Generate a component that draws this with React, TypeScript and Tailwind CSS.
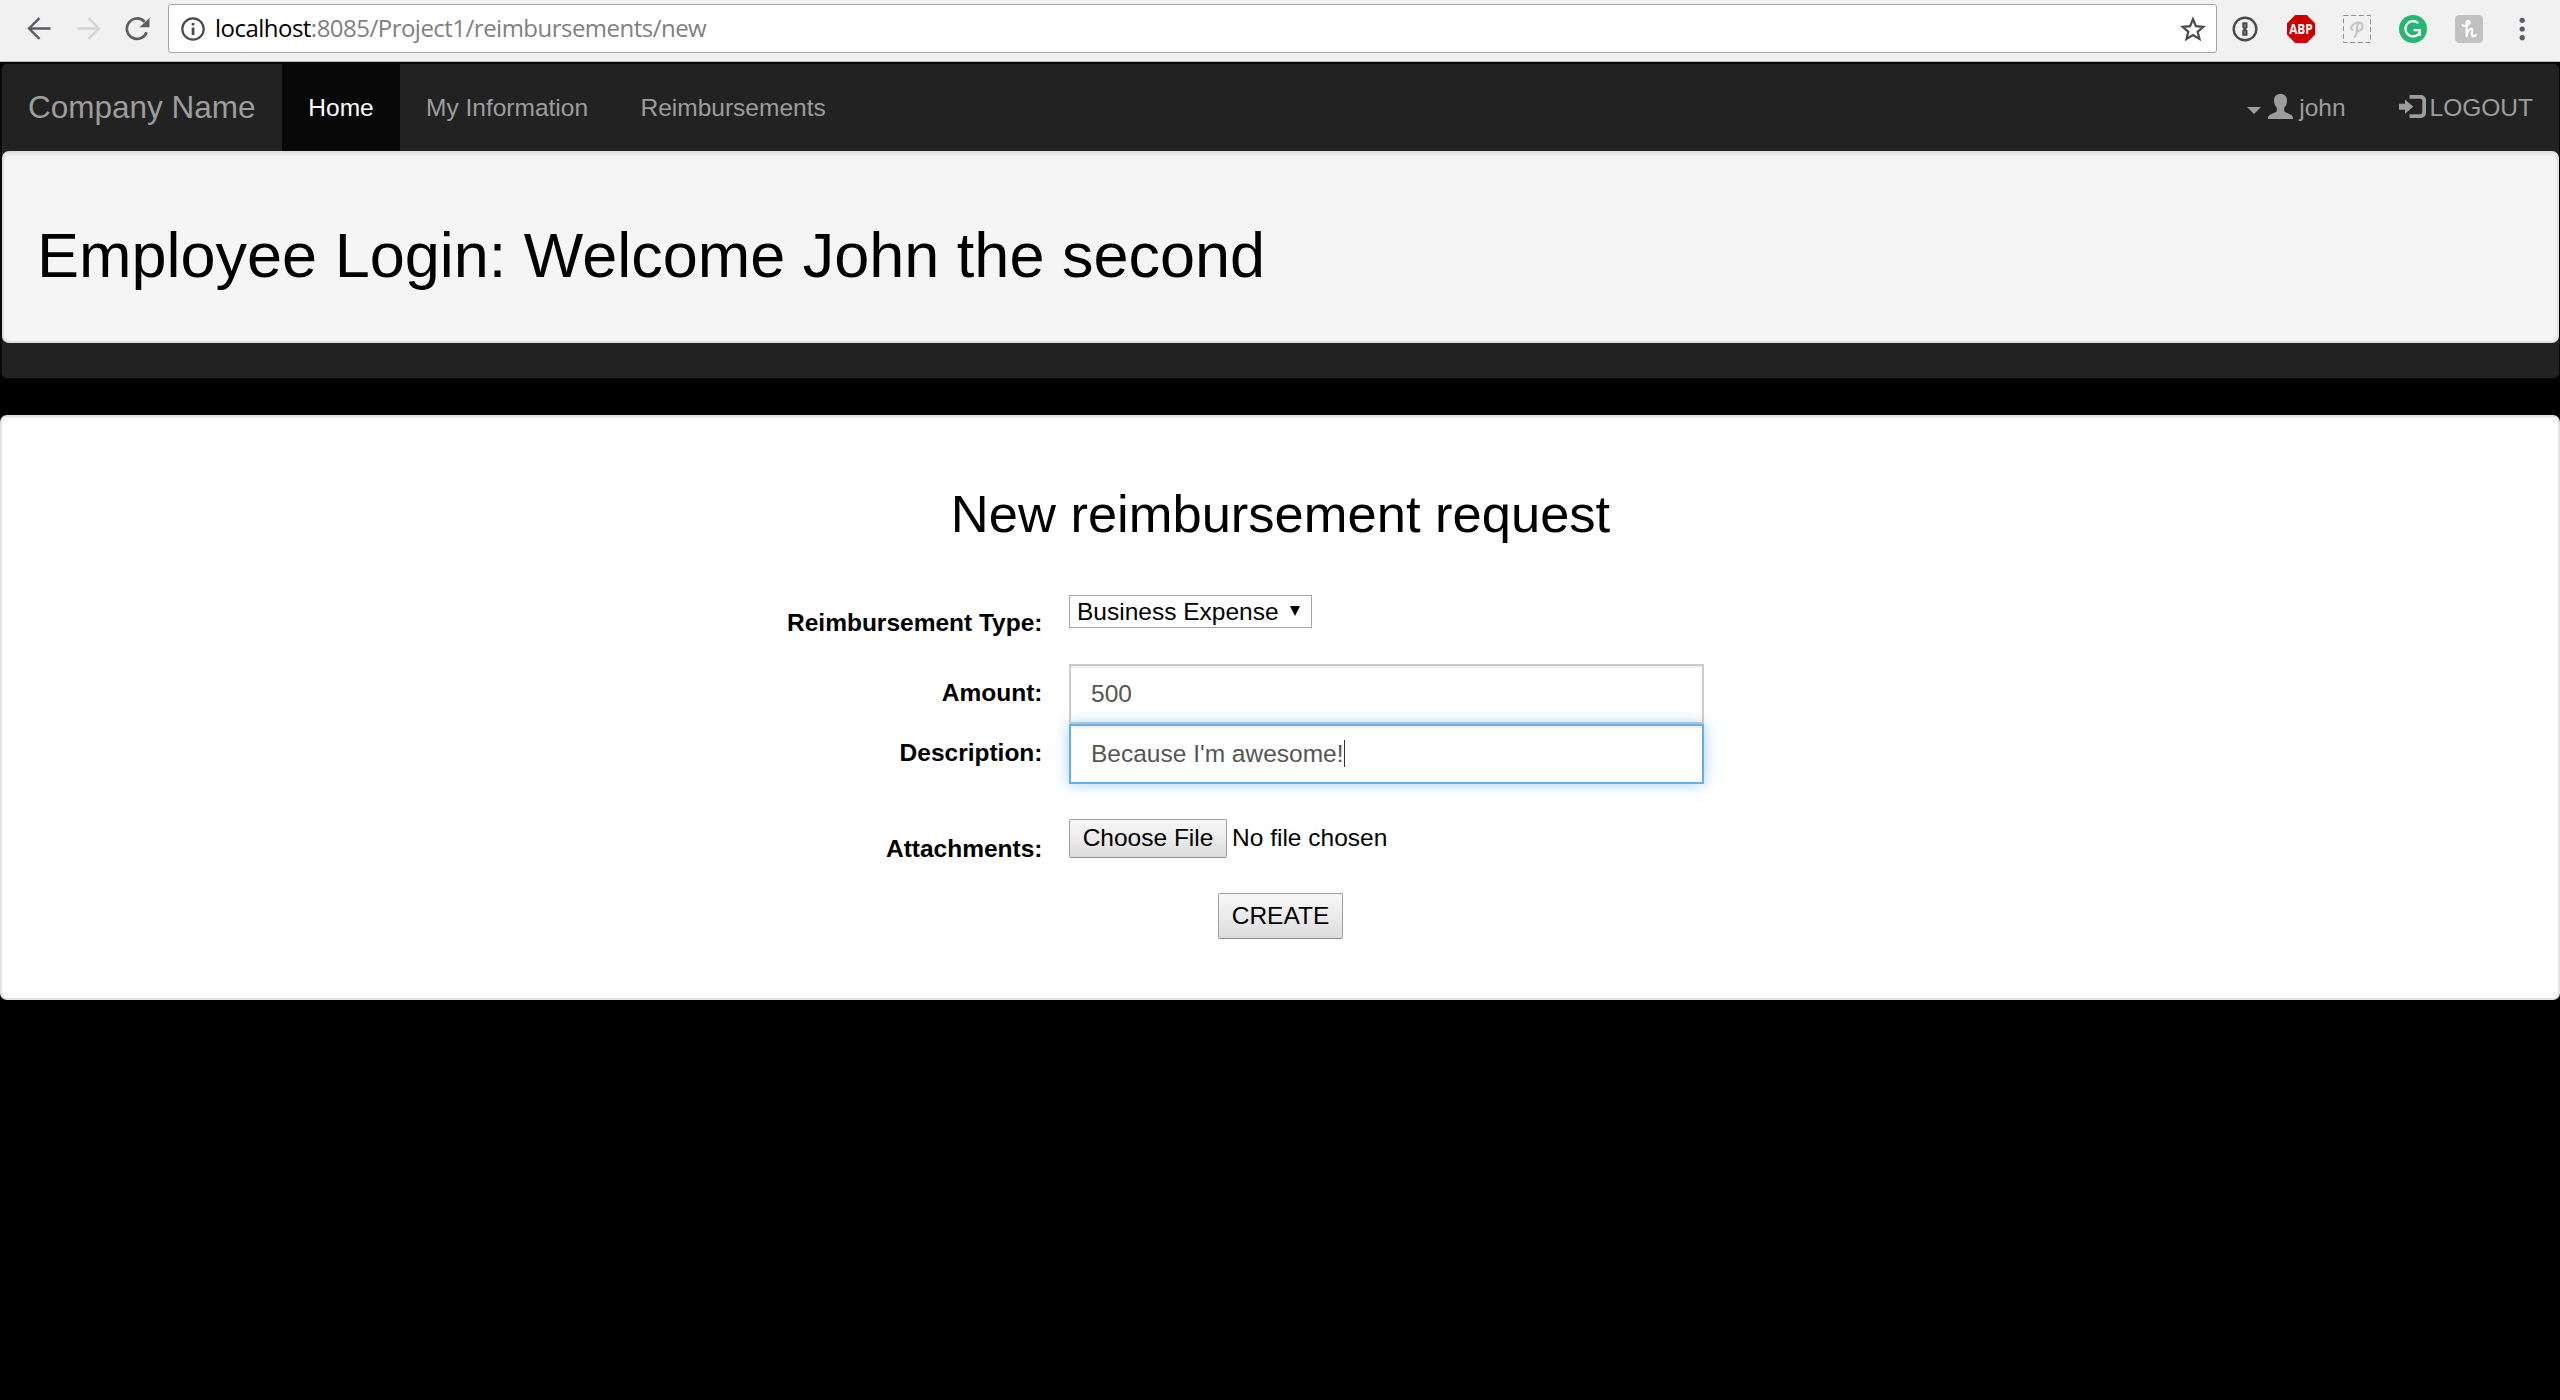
import React from "react";

function BrowserBar() {
  return (
    <div className="flex h-[62px] items-start border-b border-[#b4bab4] bg-[#f1f1f1] pl-[27px]">
      <svg className="mt-[17px] h-6 w-6" viewBox="0 0 24 24" fill="none" stroke="#5a5d61" strokeWidth="2.4">
        <path d="M23.5 11.5H2M12.5 1.2L2 11.5L12.5 21.8" />
      </svg>
      <svg className="mt-[17px] ml-[26px] h-6 w-6" viewBox="0 0 24 24" fill="none" stroke="#d3d4d5" strokeWidth="2.4">
        <path d="M0.5 11.5H22M11.5 1.2L22 11.5L11.5 21.8" />
      </svg>
      <svg className="mt-[16px] ml-[24px] h-[26px] w-[26px]" viewBox="0 0 26 26">
        <path d="M21.6 16.3A10.2 10.2 0 1 1 19.6 5.8" fill="none" stroke="#5a5d61" strokeWidth="2.7" />
        <path d="M24.5 2V11.2H14.5Z" fill="#5a5d61" />
      </svg>
      <div className="mt-1 ml-[17px] flex h-[49px] w-[2049px] items-center rounded-[3px] border border-[#a6a6a6] bg-white pl-3 font-['Open_Sans',sans-serif]">
        <svg className="mt-[1px] h-6 w-6 shrink-0" viewBox="0 0 24 24">
          <circle cx="12" cy="12" r="10.7" fill="none" stroke="#4a4a4a" strokeWidth="2.2" />
          <path d="M10.7 6h2.7v2.6h-2.7zM10.7 10.6h2.7v7.4h-2.7z" fill="#4a4a4a" />
        </svg>
        <div className="-mt-[1px] ml-[10px] text-[24px] leading-[40px] tracking-[-0.52px] whitespace-nowrap text-[#808080]">
          <span className="text-black">localhost</span>:8085/Project1/reimbursements/new
        </div>
        <svg className="mr-[10px] ml-auto h-[26px] w-[26px]" viewBox="0 0 26 26" fill="none" stroke="#4a4a4a" strokeWidth="2.2">
          <path d="M13 3.2L15.9 10.2L23.4 10.8L17.7 15.7L19.5 23L13 19.1L6.5 23L8.3 15.7L2.6 10.8L10.1 10.2Z" />
        </svg>
      </div>
      <svg className="mt-4 ml-[15px] h-[26px] w-[26px]" viewBox="0 0 26 26">
        <circle cx="13" cy="13" r="11.3" fill="none" stroke="#4a4a4a" strokeWidth="2.4" />
        <path d="M10.3 6.2h5.2v5.6l-1.4 1.2 1.4 1.6v5.2h-5.2v-5.6l1.4-1.2-1.4-1.6z" fill="#4a4a4a" />
        <path d="M13 8v3M13 15v3" stroke="#999" strokeWidth="1" />
      </svg>
      <svg className="mt-[15px] ml-[29px] h-7 w-7 overflow-visible" viewBox="0 0 28 28">
        <path d="M8.2 0h11.6L28 8.2v11.6L19.8 28H8.2L0 19.8V8.2Z" fill="#cc0000" />
        <text x="2.2" y="19" textLength="23.6" lengthAdjust="spacingAndGlyphs" fontFamily="Open Sans" fontWeight="700" fontSize="13.5" fill="#fff">ABP</text>
      </svg>
      <svg className="mt-[15px] ml-7 h-7 w-7" viewBox="0 0 28 28" fill="none">
        <rect x="0.5" y="0.5" width="27" height="27" stroke="#909090" strokeDasharray="5 2.7" />
        <path d="M9.5 14.8C6.2 14 8.6 9 14 7.6C20.4 6.2 21 13 17.2 15.4C15 16.6 13.4 15.8 13.6 14.4M15.2 8.5C13.2 12 15 18.5 11.6 22" stroke="#c6c6c6" strokeWidth="2.2" strokeLinecap="round" />
      </svg>
      <svg className="mt-[15px] ml-7 h-7 w-7" viewBox="0 0 28 28" fill="none" stroke="#fff" strokeWidth="2.3">
        <circle cx="14" cy="14" r="14" fill="#27b671" stroke="none" />
        <path d="M19.2 8.2A7.6 7.6 0 1 0 20.8 17.2M14.5 15.2H20.8V21" />
      </svg>
      <svg className="mt-[15px] ml-7 h-7 w-7" viewBox="0 0 28 28" fill="none" stroke="#fff" strokeWidth="2.1" strokeLinecap="round" strokeLinejoin="round">
        <rect width="28" height="28" rx="4.5" fill="#c1c1c1" stroke="none" />
        <path d="M7.5 10.2C9.5 12.2 14.8 9.6 14.6 7.2C14.3 5 11.3 5.6 11.4 8.8C11.6 13 12 17 11.6 21.3C12 17.5 14 13.8 16.2 13.8C18.6 13.8 16.6 17.4 16.8 19.4C17 21.8 19.4 21.8 21 19.8" />
      </svg>
      <svg className="mt-4 ml-[36px] h-[26px] w-2" viewBox="0 0 8 26" fill="#5a5d61">
        <circle cx="3.2" cy="4.3" r="2.6" />
        <circle cx="3.2" cy="13" r="2.6" />
        <circle cx="3.2" cy="21.7" r="2.6" />
      </svg>
    </div>
  );
}

function NavBar() {
  return (
    <nav className="h-[318px] rounded-[7px] border-2 border-r border-[#080808] bg-[#222222]">
      <div className="flex h-[87px] items-center text-[#9d9d9d]">
        <div className="flex h-full w-[280px] items-center pl-[26px] text-[31.5px] whitespace-nowrap">Company Name</div>
        <div className="flex h-full w-[118px] items-center justify-center bg-[#080808] text-white">Home</div>
        <div className="pl-[26px]">My Information</div>
        <div className="pl-[52.5px]">Reimbursements</div>
        <div className="ml-auto flex items-center">
          <svg className="mt-[5px] h-[7px] w-[14px]" viewBox="0 0 14 7" fill="#9d9d9d">
            <path d="M0 0H14L7 7Z" />
          </svg>
          <svg className="-mt-[3px] ml-[7px] h-[25px] w-[25px]" viewBox="0 0 25 25" fill="#9d9d9d">
            <path d="M12.5 0C16.6 0 19 2.3 19 6.3C19 9.4 18 12 16.2 13.8V16.4C16.2 17.4 17 18 18.2 18.5L22.5 20.4C24.4 21.3 25 22.4 25 25H0C0 22.4 .6 21.3 2.5 20.4L6.8 18.5C8 18 8.8 17.4 8.8 16.4V13.8C7 12 6 9.4 6 6.3C6 2.3 8.4 0 12.5 0Z" />
          </svg>
          <span className="ml-[6px]">john</span>
          <svg className="-mt-[2px] ml-[53px] h-[23px] w-[27px]" viewBox="0 0 27 23" fill="#9d9d9d">
            <path d="M0 8.7H6V4.6L14.3 11.7L6 18.8V14.7H0Z" />
            <path d="M10.5 0H22A5 5 0 0 1 27 5V18A5 5 0 0 1 22 23H10.5V19.3H21.5A2 2 0 0 0 23.3 17.5V5.5A2 2 0 0 0 21.5 3.7H10.5Z" />
          </svg>
          <span className="mr-[26px] ml-[4px]">LOGOUT</span>
        </div>
      </div>
      <header className="flex h-[192px] items-center rounded-[7px] border-2 border-[#e0e0e0] bg-[#f5f5f5] pt-[15px] pl-[33px] shadow-[inset_0_2px_2px_rgba(0,0,0,0.05)]">
        <h1 className="text-[63px] leading-[70px] text-black">Employee Login: Welcome John the second</h1>
      </header>
    </nav>
  );
}

function FormRow({ label, labelClass, children }: { label: string; labelClass: string; children: React.ReactNode }) {
  return (
    <div className="flex items-start">
      <label className={"w-[1040.5px] shrink-0 text-right font-bold leading-[34px] " + labelClass}>{label}</label>
      <div className="ml-[26.5px]">{children}</div>
    </div>
  );
}

function RequestForm() {
  return (
    <section className="mt-[35px] h-[585px] rounded-[7px] border-2 border-[#e3e3e3] bg-white pt-[68px] text-black shadow-[inset_0_2px_2px_rgba(0,0,0,0.05)]">
      <h2 className="pl-[1px] text-center text-[52.5px] leading-[58px]">New reimbursement request</h2>
      <form className="mt-[52px]">
        <FormRow label="Reimbursement Type:" labelClass="mt-[11px]">
          <div className="flex h-[33px] w-[243px] items-center border border-[#a6a6a6] pl-[7px] whitespace-nowrap">
            Business Expense
            <svg className="mt-[-2px] ml-[11px] h-[10px] w-[10px]" viewBox="0 0 10 10">
              <path d="M0 0H10L5 10Z" />
            </svg>
          </div>
        </FormRow>
        <div className="mt-[24px]">
          <FormRow label="Amount:" labelClass="mt-[12px]">
            <div className="flex h-[60px] w-[635px] items-center border-2 border-[#cccccc] pb-[2px] pl-[20px] text-[#555555] shadow-[inset_0_2px_2px_rgba(0,0,0,0.075)]">500</div>
          </FormRow>
        </div>
        <FormRow label="Description:" labelClass="mt-[12px]">
          <div className="relative flex h-[60px] w-[635px] items-center border-2 border-[#66afe9] pb-[2px] pl-[20px] text-[#555555] shadow-[inset_0_2px_2px_rgba(0,0,0,0.075),0_0_14px_rgba(102,175,233,0.6)]">
            Because I'm awesome!
            <span className="h-[27px] w-px bg-[#333]" />
          </div>
        </FormRow>
        <div className="mt-[35px]">
          <FormRow label="Attachments:" labelClass="mt-[13px]">
            <div className="flex items-start">
              <button type="button" className="h-[39px] w-[158px] rounded-[2px] border border-[#a0a0a0] border-b-[#8e8e8e] bg-linear-to-b from-[#f8f8f8] to-[#dddddd] pb-[1px] leading-[30px]">Choose File</button>
              <span className="ml-[5px] leading-[37px]">No file chosen</span>
            </div>
          </FormRow>
        </div>
        <div className="mt-[27px] flex justify-center">
          <button type="button" className="h-[46px] w-[125px] rounded-[2px] border border-[#a0a0a0] border-b-[#8e8e8e] bg-linear-to-b from-[#f8f8f8] to-[#dddddd] pl-[1px] leading-[30px]">CREATE</button>
        </div>
      </form>
    </section>
  );
}

export default function App() {
  return (
    <div className="h-[1400px] w-[2560px] overflow-hidden bg-black font-['Liberation_Sans',Arial,sans-serif] text-[24.5px] leading-[35px]">
      <BrowserBar />
      <NavBar />
      <RequestForm />
    </div>
  );
}
